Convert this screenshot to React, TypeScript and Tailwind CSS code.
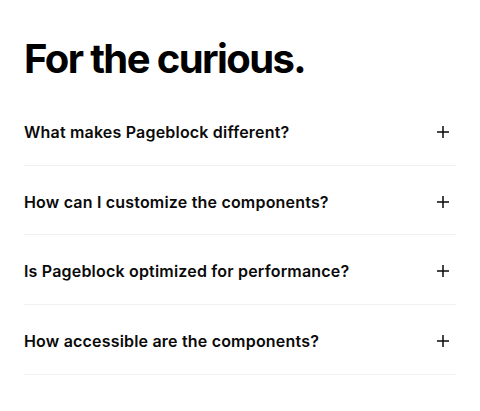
import React from "react";

const items = [
  "What makes Pageblock different?",
  "How can I customize the components?",
  "Is Pageblock optimized for performance?",
  "How accessible are the components?",
];

function PlusIcon() {
  return (
    <svg width="20" height="20" viewBox="0 0 20 20" fill="none" stroke="currentColor" strokeWidth="1.5" strokeLinecap="butt">
      <path d="M10 4v12M4 10h12" />
    </svg>
  );
}

export default function App() {
  return (
    <div className="min-h-screen bg-white text-[#0a0a0a]" style={{ fontFamily: "Inter, 'Noto Sans', sans-serif" }}>
      <div className="px-6 pt-[39px]">
        <h2 className="text-[40px] font-bold leading-none tracking-[-0.04em] mb-[17px] text-black">For the curious.</h2>
        <div className="flex flex-col">
          {items.map((q) => (
            <div key={q} className="flex items-center justify-between border-b border-[#f1f1f1] pt-6 pb-[20.67px]">
              <span className="text-base leading-6 font-semibold tracking-[0.012em]">{q}</span>
              <span className="mr-[3px]">
                <PlusIcon />
              </span>
            </div>
          ))}
        </div>
      </div>
    </div>
  );
}
